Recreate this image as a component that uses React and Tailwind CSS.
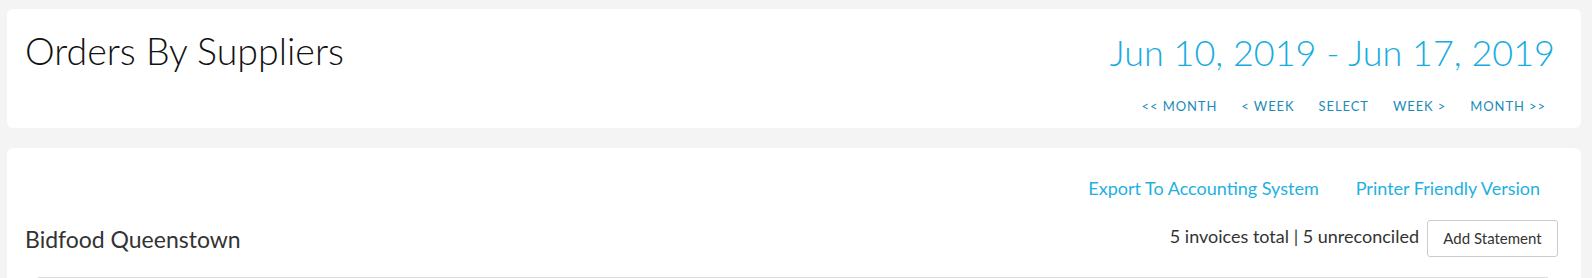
export default function App() {
    const navItems = ['<< MONTH', '< WEEK', 'SELECT', 'WEEK >', 'MONTH >>'];

    return (
        <div className="min-h-[278px] bg-[#f4f4f4] pl-[7px] pr-[11px] pt-[9px] font-['Lato',sans-serif]">
            <div className="flex h-[119px] justify-between rounded-md bg-white pl-[18px] pr-[26px]">
                <h1 className="pt-[18px] text-[37.5px] font-light leading-[48px] text-[#111]">
                    Orders By Suppliers
                </h1>
                <div className="flex flex-col items-end pt-[19px]">
                    <div className="text-[36px] font-light leading-[48px] text-[#17ace0]">
                        Jun 10, 2019 - Jun 17, 2019
                    </div>
                    <div className="mt-[24px] flex gap-[24px] pr-[9px] text-[13px] tracking-[0.07em] text-[#1b8bb8]">
                        {navItems.map(item => (
                            <a key={item} href="#" className="leading-none">
                                {item}
                            </a>
                        ))}
                    </div>
                </div>
            </div>

            <div className="mt-[20px] rounded-t-md bg-white pl-[18px] pr-[23px]">
                <div className="flex justify-end gap-[37px] pr-[18px] pt-[28px] text-[18px] leading-[24px] text-[#1fb0e2]">
                    <a href="#">Export To Accounting System</a>
                    <a href="#">Printer Friendly Version</a>
                </div>
                <div className="mt-[20px] flex justify-between">
                    <div className="mb-[4px] self-end text-[23px] leading-[28px] text-[#333]">Bidfood Queenstown</div>
                    <div className="flex items-center gap-[8px]">
                        <span className="relative top-[-2px] text-[18px] text-[#333]">
                            5 invoices total | 5 unreconciled
                        </span>
                        <button className="h-[37px] w-[131px] rounded-[3px] border border-[#ccc] text-[15px] text-[#333]">
                            Add Statement
                        </button>
                    </div>
                </div>
                <div className="ml-[13px] mr-[10px] mt-[20px] border-t border-[#ddd]" />
            </div>
        </div>
    );
}
